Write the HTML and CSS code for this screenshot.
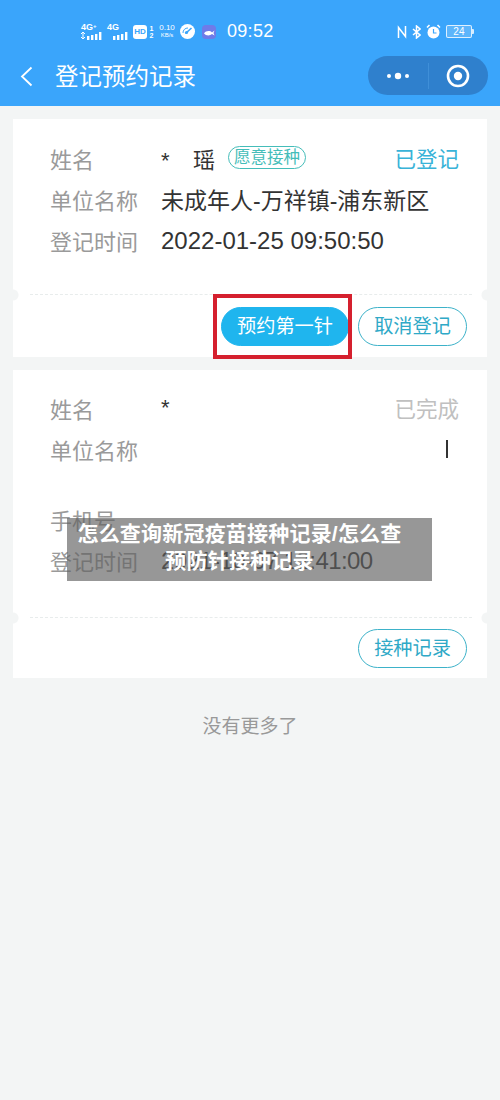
FILE: index.html
```html
<!DOCTYPE html>
<html lang="zh-CN">
<head>
<meta charset="utf-8">
<title>登记预约记录</title>
<link rel="stylesheet" href="styles.css">
</head>
<body>
<div class="page">
  <header class="header">
    <div class="status">
      <div class="status-left">
        <div class="sig"><span class="sig-label">4G<sup>+</sup></span>
          <svg width="23" height="9" viewBox="0 0 23 9"><path d="M2 1v7M0 3l2-2 2 2M0 6l2 2 2-2" fill="none" stroke="#fff" stroke-width="1"/><rect x="6" y="5" width="2.4" height="4" fill="#fff"/><rect x="10" y="4" width="2.4" height="5" fill="#fff"/><rect x="14" y="3" width="2.4" height="6" fill="#fff"/><rect x="18" y="1" width="2.4" height="8" fill="#fff"/></svg></div>
        <div class="sig"><span class="sig-label">4G</span>
          <svg width="23" height="9" viewBox="0 0 23 9"><rect x="6" y="5" width="2.4" height="4" fill="#fff"/><rect x="10" y="4" width="2.4" height="5" fill="#fff"/><rect x="14" y="3" width="2.4" height="6" fill="#fff"/><rect x="18" y="1" width="2.4" height="8" fill="#fff"/></svg></div>
        <span class="hd">HD</span>
        <span class="hd-nums"><span>1</span><span>2</span></span>
        <span class="speed"><span class="speed-a">0.10</span><span class="speed-b">KB/s</span></span>
        <svg class="gauge" width="15" height="15" viewBox="0 0 15 15"><circle cx="7.5" cy="7.5" r="7.5" fill="#fff"/><path d="M5.5 9.500 11.500 4" stroke="#3aa5fb" stroke-width="1.6"/><path d="M3 9a4.800 4.800 0 0 1 5-5" fill="none" stroke="#3aa5fb" stroke-width="1"/><circle cx="6.500" cy="8.500" r="1.600" fill="#3aa5fb"/></svg>
        <svg class="fish" width="14" height="14" viewBox="0 0 14 14"><rect width="14" height="14" rx="4" fill="#6f7be8"/><path d="M2 8.500C4 5.500 8 5.500 10 7.500L12.500 5.500 11.500 8 12.500 10.500 10 9C8 11 4 11 2 8.500z" fill="#fff"/></svg>
        <span class="clock">09:52</span>
      </div>
      <div class="status-right">
        <svg width="10" height="14" viewBox="0 0 10 14"><path d="M1.500 13V2.500L8.500 11.500V1" fill="none" stroke="#fff" stroke-width="1.500"/></svg>
        <svg width="9" height="14" viewBox="0 0 9 14"><path d="M1 4l7 6-3.500 3V1L8 4 1 10" fill="none" stroke="#fff" stroke-width="1.500"/></svg>
        <svg width="15" height="15" viewBox="0 0 15 15"><circle cx="7.500" cy="8.500" r="6" fill="#fff"/><path d="M1 3.500 3.500 1M14 3.500 11.500 1" stroke="#fff" stroke-width="1.600"/><path d="M7.500 5v4h3" fill="none" stroke="#3aa5fb" stroke-width="1.200"/></svg>
        <span class="battery"><span class="battery-num">24</span></span>
      </div>
    </div>
    <div class="nav">
      <svg class="back" width="13" height="21" viewBox="0 0 13 21"><path d="M11.500 1.500 2 10.500l9.500 9" fill="none" stroke="#fff" stroke-width="1.800"/></svg>
      <h1 class="title">登记预约记录</h1>
      <div class="capsule">
        <div class="cap-part">
          <svg width="24" height="8" viewBox="0 0 24 8"><circle cx="3" cy="4" r="2" fill="#fff"/><circle cx="12" cy="4" r="3.200" fill="#fff"/><circle cx="21" cy="4" r="2" fill="#fff"/></svg>
        </div>
        <div class="cap-part cap-right">
          <svg width="24" height="24" viewBox="0 0 24 24"><circle cx="12" cy="12" r="10" fill="none" stroke="#fff" stroke-width="2.600"/><circle cx="12" cy="12" r="4.200" fill="#fff"/></svg>
        </div>
      </div>
    </div>
  </header>

  <main class="list">
    <section class="card card-first">
      <div class="body">
        <div class="row">
          <span class="label">姓名</span>
          <span class="value name"><span class="star">*</span><span class="yao">瑶</span></span>
          <span class="tag">愿意接种</span>
          <span class="state state-on">已登记</span>
        </div>
        <div class="row"><span class="label">单位名称</span><span class="value">未成年人-万祥镇-浦东新区</span></div>
        <div class="row"><span class="label">登记时间</span><span class="value date">2022-01-25 09:50:50</span></div>
      </div>
      <div class="foot">
        <span class="btn btn-fill">预约第一针<span class="highlight"></span></span>
        <span class="btn">取消登记</span>
      </div>
    </section>

    <section class="card card-second">
      <div class="body body-second">
        <div class="row">
          <span class="label">姓名</span>
          <span class="value name"><span class="star">*</span></span>
          <span class="state state-off">已完成</span>
        </div>
        <div class="row"><span class="label">单位名称</span><span class="caret"></span></div>
        <div class="row row-phone"><span class="label">手机号</span></div>
        <div class="row"><span class="label">登记时间</span><span class="value date date-narrow">2021-10-07 12:41:00</span></div>
      </div>
      <div class="foot">
        <span class="btn">接种记录</span>
      </div>
    </section>

    <p class="no-more">没有更多了</p>
  </main>

  <div class="caption">怎么查询新冠疫苗接种记录/怎么查<br>预防针接种记录</div>
</div>
</body>
</html>
```

FILE: styles.css
```css
* { box-sizing: border-box; }
html, body { margin: 0; padding: 0; }
body {
  width: 500px;
  height: 1100px;
  overflow: hidden;
  background: #f3f5f5;
  font-family: "Liberation Sans", "Noto Sans CJK SC", sans-serif;
  color: #333;
}
.page { position: relative; width: 500px; height: 1100px; }

.header { height: 106px; background: #3aa5fb; color: #fff; }
.status {
  height: 56px;
  padding: 22px 28px 0 81px;
  display: flex;
  justify-content: space-between;
  align-items: flex-start;
}
.status-left { display: flex; align-items: center; height: 17px; margin-top: 1px; }
.status-right { display: flex; align-items: center; height: 17px; margin-top: 1px; gap: 5px; }
.sig { display: flex; flex-direction: column; width: 26px; }
.sig-label { font: bold 9px/8px "Liberation Sans", sans-serif; }
.sig-label sup { font-size: 6px; line-height: 0; vertical-align: 2px; }
.hd {
  width: 14px; height: 14px;
  background: #fff;
  border-radius: 3px;
  color: #3aa5fb;
  font: bold 8px/14px "Liberation Sans", sans-serif;
  text-align: center;
}
.hd-nums { display: flex; flex-direction: column; width: 7px; margin-left: 1px; font: bold 7px/7px "Liberation Sans", sans-serif; text-align: center; }
.speed { display: flex; flex-direction: column; margin-left: 3px; width: 18px; align-items: center; }
.speed-a { font-size: 8px; line-height: 8px; }
.speed-b { font-size: 6px; line-height: 7px; }
.gauge { margin-left: 4px; }
.fish { margin-left: 7px; }
.clock { margin-left: 11px; font-size: 18px; letter-spacing: .3px; line-height: 17px; }
.battery {
  width: 26px; height: 13px;
  border: 1px solid rgba(255,255,255,.8);
  border-radius: 2px;
  background: rgba(255,255,255,.18);
  display: flex; align-items: center; justify-content: center;
  position: relative;
}
.battery::after {
  content: ""; position: absolute; right: -3px; top: 3px;
  width: 2px; height: 5px; background: rgba(255,255,255,.8); border-radius: 0 1px 1px 0;
}
.battery-num { font-size: 10px; line-height: 11px; letter-spacing: .3px; }

.nav { height: 50px; display: flex; align-items: flex-start; padding: 0 12px 0 20px; }
.back { margin-top: 10px; }
.title {
  margin: 6px 0 0 22px;
  font-size: 23.500px; line-height: 30px; font-weight: 400;
  flex: 1;
}
.capsule {
  width: 120px; height: 39px; margin-top: 0;
  background: #2f80cd;
  border-radius: 20px;
  display: flex; align-items: center;
}
.cap-part { flex: 1; display: flex; align-items: center; justify-content: center; height: 26px; }
.cap-right { border-left: 1px solid #3f8fd8; }

.list { padding: 13px 13px 0; }
.card { background: #fff; position: relative; }
.card-first { height: 238px; }
.card-second { height: 308px; margin-top: 13px; }
.body { height: 176px; padding: 18px 28px 0 37px; position: relative; }
.body-second { height: 248px; padding-top: 17px; }
.body::after {
  content: ""; position: absolute; left: 17px; right: 15px; bottom: 0;
  border-bottom: 1px dashed #e8ecec;
}
.body::before {
  content: ""; position: absolute; left: 0; right: 0; bottom: -6px; height: 12px;
  background:
    radial-gradient(circle at 0 50%, #f3f5f5 5px, transparent 6px),
    radial-gradient(circle at 100% 50%, #f3f5f5 5px, transparent 6px);
}
.row { display: flex; align-items: center; height: 41px; }
.row-phone { height: 70px; padding-top: 29px; }
.label { width: 111px; font-size: 22px; color: #9a9a9a; white-space: nowrap; flex: none; }
.value { font-size: 23px; color: #333; white-space: nowrap; }
.date { font-size: 24px; padding-top: 3px; }
.date-narrow { letter-spacing: -.6px; }
.name { display: flex; align-items: baseline; }
.star { font-size: 22px; width: 32px; }
.yao { font-size: 22px; }
.tag {
  margin-left: 13px;
  height: 23px; width: 78px;
  border: 1px solid #45bdb9;
  border-radius: 12px;
  color: #45bdb9;
  font-size: 16.500px; line-height: 20px;
  text-align: center;
  white-space: nowrap;
}
.state { margin-left: auto; font-size: 21.500px; white-space: nowrap; }
.state-on { color: #39b3d8; }
.state-off { color: #c0c0c0; }
.caret { margin-left: 285px; width: 2px; height: 18px; background: #333; flex: none; }
.foot { display: flex; justify-content: flex-end; gap: 9px; padding: 12px 20px 0 0; }
.body-second + .foot { padding-top: 11px; }
.btn {
  position: relative;
  width: 109px; height: 39px;
  border: 1.500px solid #3db2c9;
  border-radius: 20px;
  color: #2fa9c7;
  font-size: 19.200px; line-height: 37px;
  text-align: center;
  white-space: nowrap;
  background: #fff;
}
.btn-fill {
  width: 128px;
  background: #1fb5ee; border-color: #1fb5ee;
  color: #fff;
}
.highlight {
  position: absolute;
  left: -9.500px; top: -14.500px;
  width: 139px; height: 65px;
  border: 4px solid #d5202e;
}
.no-more { margin: 37px 0 0; text-align: center; font-size: 19px; line-height: 24px; color: #999; }

.caption {
  position: absolute;
  left: 67px; top: 518px;
  width: 365px; height: 63px;
  padding: 2px 20px 0 0;
  background: rgba(96,96,96,.65);
  color: #fff;
  font-size: 21px; line-height: 27px; font-weight: 700;
  letter-spacing: .2px;
  text-align: center;
}
```
